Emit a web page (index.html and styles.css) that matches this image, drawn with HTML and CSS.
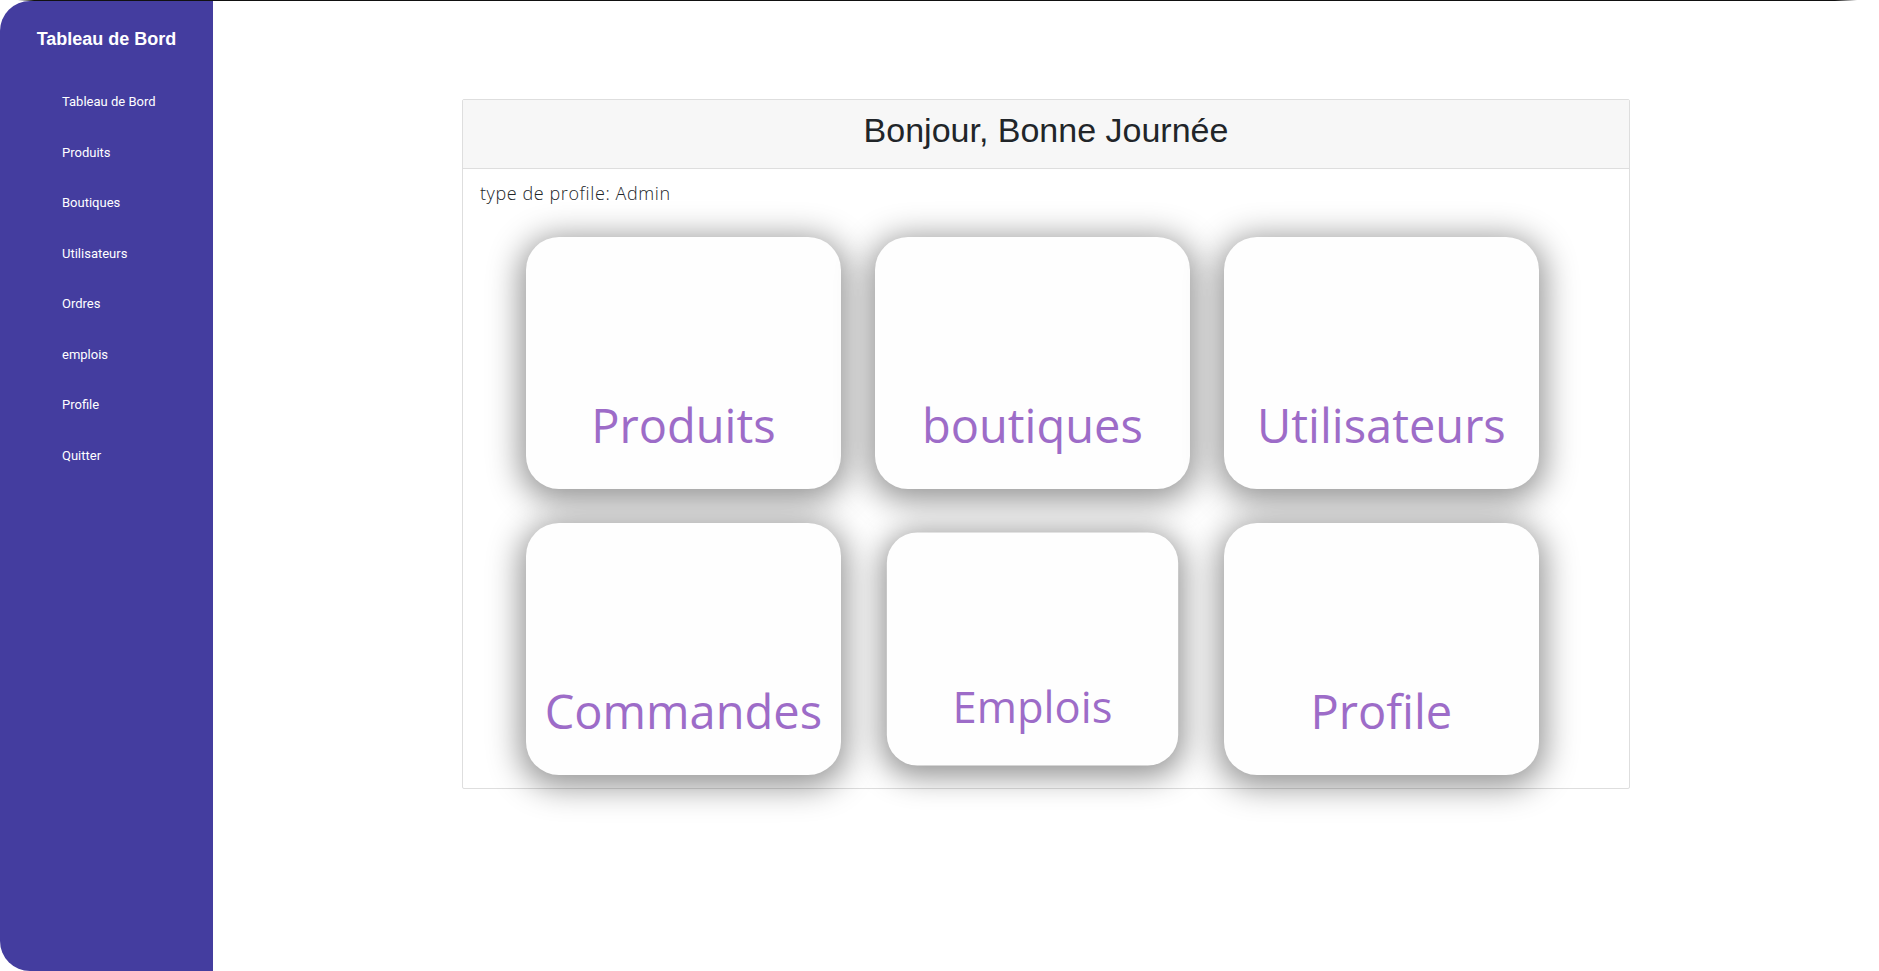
FILE: index.html
```html
<!DOCTYPE html>
<html lang="fr">
<head>
<meta charset="utf-8">
<title>Tableau de Bord</title>
<link rel="stylesheet" href="styles.css">
</head>
<body>
<div class="app">
  <aside class="sidebar">
    <h1 class="brand">Tableau de Bord</h1>
    <nav class="nav">
      <a class="nav-link" href="#">Tableau de Bord</a>
      <a class="nav-link" href="#">Produits</a>
      <a class="nav-link" href="#">Boutiques</a>
      <a class="nav-link" href="#">Utilisateurs</a>
      <a class="nav-link" href="#">Ordres</a>
      <a class="nav-link" href="#">emplois</a>
      <a class="nav-link" href="#">Profile</a>
      <a class="nav-link" href="#">Quitter</a>
    </nav>
  </aside>
  <main class="main">
    <section class="card">
      <header class="card-header">Bonjour, Bonne Journée</header>
      <div class="card-body">
        <p class="profile-type">type de profile: Admin</p>
        <div class="tiles">
          <a class="tile" href="#"><span>Produits</span></a>
          <a class="tile" href="#"><span>boutiques</span></a>
          <a class="tile" href="#"><span>Utilisateurs</span></a>
          <a class="tile" href="#"><span>Commandes</span></a>
          <a class="tile tile-hover" href="#"><span>Emplois</span></a>
          <a class="tile" href="#"><span>Profile</span></a>
        </div>
      </div>
    </section>
  </main>
</div>
</body>
</html>
```

FILE: styles.css
```css
html, body {
  margin: 0;
  padding: 0;
  background: #ffffff;
}

.app {
  display: flex;
  height: 971px;
  padding-top: 1px;
  box-sizing: border-box;
  background:
    linear-gradient(to right, rgba(17,17,17,0) 18px, #111 34px, #111 calc(100% - 44px), rgba(17,17,17,0) calc(100% - 22px)) top left / 100% 1px no-repeat,
    #ffffff;
}

.sidebar {
  width: 213px;
  flex: 0 0 213px;
  background: #443d9f;
  color: #fff;
  border-radius: 30px 0 0 30px;
}

.brand {
  margin: 0;
  padding: 27px 0 0 0;
  text-align: center;
  font-family: "Liberation Sans", Arial, sans-serif;
  font-weight: 700;
  font-size: 18px;
  line-height: 22px;
  height: 49px;
}

.nav {
  display: flex;
  flex-direction: column;
  padding-left: 62px;
}

.nav-link {
  display: block;
  height: 50.5px;
  line-height: 50px;
  color: #ffffff;
  text-decoration: none;
  font-family: Roboto, "Liberation Sans", sans-serif;
  font-size: 13px;
  font-weight: 400;
}

.main {
  flex: 1;
  padding-top: 98px;
  display: flex;
  justify-content: center;
  align-items: flex-start;
}

.card {
  width: 70%;
  border: 1px solid #dedede;
  border-radius: 2px;
  background: #fff;
}

.card-header {
  height: 68px;
  line-height: 60px;
  background: #f7f7f7;
  border-bottom: 1px solid #dedede;
  text-align: center;
  font-family: "Liberation Sans", Arial, sans-serif;
  font-size: 34px;
  color: #212529;
}

.card-body {
  padding: 10px 17px 13px 17px;
}

.profile-type {
  margin: 0;
  font-family: "Open Sans", sans-serif;
  font-weight: 300;
  font-size: 18px;
  line-height: 28px;
  color: #212529;
  letter-spacing: 0.6px;
}

.tiles {
  display: grid;
  grid-template-columns: repeat(3, 315px);
  grid-auto-rows: 252px;
  column-gap: 34px;
  row-gap: 34px;
  margin-top: 30px;
  padding-left: 46px;
}

.tile {
  display: flex;
  align-items: flex-end;
  justify-content: center;
  background: #fefefe;
  border-radius: 33px;
  box-shadow: 0 6px 32px 6px rgba(0, 0, 0, 0.42);
  text-decoration: none;
  padding-bottom: 36px;
  box-sizing: border-box;
}

.tile span {
  font-family: "Open Sans", sans-serif;
  font-weight: 400;
  font-size: 47px;
  line-height: 56px;
  color: #9d6cc8;
  white-space: nowrap;
}

.tile-hover {
  transform: scale(0.925);
}
```
